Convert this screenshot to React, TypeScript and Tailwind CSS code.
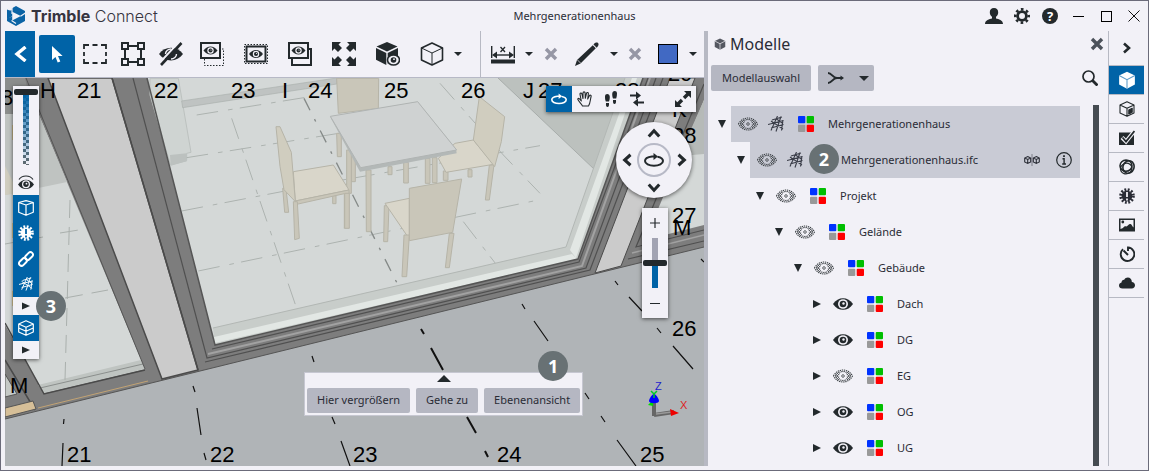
import type { ReactNode } from "react";
import clsx from "clsx";

const INK = "#23292c";

interface IconProps {
  className?: string;
}

/* ---------- icons ---------- */

function LogoMark() {
  return (
    <svg className="h-5 w-[18px]" viewBox="0 0 18 20" aria-hidden="true">
      <path
        fillRule="evenodd"
        d="M9 0 18 5v10l-9 5-9-5V5ZM5.2 5.8v8.6l8.6-4.3Z"
        fill="#0b63a5"
      />
      <path d="M5 0v8M4.500 14.500 9 17.500M13.500 10.300 18.500 7" fill="none" stroke="#f2f1f7" strokeWidth="1.200" />
      <path d="M0 5v-1.500L4.500 1v3ZM0 12l4.500-1.500" fill="#f2f1f7" stroke="#f2f1f7" strokeWidth=".6" />
      <path d="M0 3.500 4 5v6L0 13Z" fill="#0b63a5" />
    </svg>
  );
}

function Eye({ className }: IconProps) {
  return (
    <svg className={className} viewBox="0 0 20 12" aria-hidden="true">
      <path d="M0 6C5-1.800 15-1.800 20 6 15 13.800 5 13.800 0 6Z" fill={INK} />
      <path d="M5 6a5 4.800 0 0 1 10 0 5 4.800 0 0 1-10 0Z" fill="#f2f1f7" />
      <circle cx="10" cy="6" r="3.300" fill={INK} />
      <circle cx="10.500" cy="5.500" r="1.200" fill="#f2f1f7" />
    </svg>
  );
}

function GhostEye({ className }: IconProps) {
  return (
    <svg className={className} viewBox="0 0 20 14" fill="none" stroke="#3b4044" aria-hidden="true">
      <path d="M.5 7C4.500-1 15.500-1 19.500 7 15.500 15 4.500 15 .5 7Z" strokeWidth="1.100" strokeDasharray="1.300 .8" />
      <path d="M2.300 7C6 .8 14 .8 17.700 7 14 13.200 6 13.200 2.300 7Z" strokeWidth=".8" strokeDasharray="1.600 .9" />
      <path d="M2 6.500 6 3M3.500 7.500 6.500 4.500M18 6.500 14 3M16.500 7.500 13.500 4.500M2 7.500 6 11M3.500 6.500 6.500 9.500M18 7.500 14 11M16.500 6.500 13.500 9.500" strokeWidth=".8" />
      <circle cx="10" cy="7" r="4.300" strokeWidth=".6" strokeDasharray="1 1" />
      <circle cx="10" cy="7" r="1.300" strokeWidth=".8" />
    </svg>
  );
}

function GridLines({ className }: IconProps) {
  return (
    <svg className={className} viewBox="0 0 16 16" fill="none" stroke="currentColor" strokeWidth="1.100" aria-hidden="true">
      <path d="M4 4 14 1M0 8.500 15.500 4.500M3 12 15.500 8.500M9.500 0 3 14.500M13 .5 8 15.500M15 4 13.500 14.500M3 5l12 8M8.500 3l6.500 4.500" />
    </svg>
  );
}

function ColorSwatches({ className }: IconProps) {
  return (
    <svg className={className} viewBox="0 0 16 16" aria-hidden="true">
      <rect width="7.300" height="7.300" rx="1" fill="#0033ff" />
      <rect x="8.700" width="7.300" height="7.300" rx="1" fill="#00bf00" />
      <rect y="8.700" width="7.300" height="7.300" rx="1" fill="#999" />
      <rect x="8.700" y="8.700" width="7.300" height="7.300" rx="1" fill="#f00" />
    </svg>
  );
}

function CubeOutline({ className }: IconProps) {
  return (
    <svg className={className} viewBox="0 0 24 24" fill="none" stroke="currentColor" strokeLinejoin="round" aria-hidden="true">
      <path d="M12 1 22.500 6v12L12 23 1.500 18V6Z" strokeWidth="1.600" />
      <path d="M1.500 6 12 11 22.500 6M12 11v12" strokeWidth="1" />
    </svg>
  );
}

function CubeSolid({ className, gap = "#f2f1f7" }: IconProps & { gap?: string }) {
  return (
    <svg className={className} viewBox="0 0 24 24" aria-hidden="true">
      <path d="M12 1 22.500 6v12L12 23.500 1.500 18V6Z" fill="currentColor" />
      <path d="M1.500 6 12 11.500 22.500 6M12 11.500v12" fill="none" stroke={gap} strokeWidth="1.400" />
    </svg>
  );
}

function Burst({ className, mark = "#f2f1f7" }: IconProps & { mark?: string }) {
  return (
    <svg className={className} viewBox="0 0 16 16" aria-hidden="true">
      <circle cx="8" cy="8" r="5.400" fill="currentColor" />
      <circle cx="8" cy="8" r="6.400" fill="none" stroke="currentColor" strokeWidth="2.800" strokeDasharray="1.800 1.550" />
      <path d="M8 4v5M8 10.500v2" stroke={mark} strokeWidth="1.800" />
    </svg>
  );
}

function CaretDown({ className }: IconProps) {
  return (
    <svg className={className} viewBox="0 0 8 4" aria-hidden="true">
      <path d="M0 0h8L4 4Z" fill={INK} />
    </svg>
  );
}

function Cross({ className }: IconProps) {
  return (
    <svg className={className} viewBox="0 0 14 14" aria-hidden="true">
      <path d="M2 2l10 10M12 2 2 12" stroke="currentColor" strokeWidth="3.400" />
    </svg>
  );
}

function Orbit({ className }: IconProps) {
  return (
    <svg className={className} viewBox="0 0 20 14" fill="none" stroke="currentColor" strokeWidth="2" aria-hidden="true">
      <path d="M13.500 3.800C17 4.500 19 6 19 8c0 2.700-4 4.700-9 4.700S1 10.700 1 8c0-2.200 3-4 7-4.500h3" />
      <path d="M9.500 0v7L14 3.500Z" fill="currentColor" stroke="none" />
    </svg>
  );
}

function Diagonal({ className }: IconProps) {
  return (
    <svg className={className} viewBox="0 0 16 16" aria-hidden="true">
      <path d="M16 0v7l-2.300-2.300-3.500 3.500-2.400-2.400 3.500-3.500L9 0ZM0 16V9l2.300 2.300 3.500-3.500 2.400 2.400-3.500 3.500L7 16Z" fill="currentColor" />
    </svg>
  );
}

function Chevron({ className }: IconProps) {
  return (
    <svg className={className} viewBox="0 0 12 12" fill="none" stroke="currentColor" strokeWidth="2.600" aria-hidden="true">
      <path d="M1.500 9 6 4l4.500 5" />
    </svg>
  );
}

/* ---------- 3D scene ---------- */

const GRID_LABELS: [string, number, number][] = [
  ["8", 1, 105],
  ["I", 11, 140],
  ["I", 11, 238],
  ["I", 11, 306],
  ["H", 40, 98],
  ["21", 77, 98],
  ["22", 154, 98],
  ["23", 231, 98],
  ["I", 282, 98],
  ["24", 308, 98],
  ["25", 384, 98],
  ["26", 461, 98],
  ["J", 523, 98],
  ["27", 538, 98],
  ["28", 615, 98],
  ["29", 668, 81],
  ["K", 672, 117],
  ["28", 672, 143],
  ["27", 672, 223],
  ["M", 673, 235],
  ["26", 672, 336],
  ["25", 640, 462],
  ["24", 497, 462],
  ["23", 353, 462],
  ["22", 210, 462],
  ["21", 67, 462],
  ["M", 10, 393],
];

function Scene() {
  return (
    <svg
      className="absolute inset-0 h-full w-full"
      viewBox="5 78 699 388"
      preserveAspectRatio="xMinYMin slice"
      role="img"
      aria-label="3D-Ansicht"
    >
      <rect x="5" y="78" width="699" height="388" fill="#b0b4b7" />
      <path d="M5 78h699v169L5 419Z" fill="#7d7d7d" />
      <path d="M5 419 704 247" stroke="#555" />

      {/* left window */}
      <path d="M5 114 39 115 145 369 44 393 5 325Z" fill="#d4d8d7" />
      <path d="M5 114 39 115 67 182 5 195Z" fill="#bfc3c1" />
      <path d="M5 166 13 182v12l-8 1Z" fill="#d0cdbf" />
      <path d="M5 78h20l8 36H5Z" fill="#8b8d8c" />
      <path d="M38 385 141 360l4 9-101 24Z" fill="#bfc4c1" />
      <path d="M40 388 143 364" stroke="#8b8f8d" />
      <path d="M5 323 44 394 145 370M5 360 35 410" fill="none" stroke="#4a4a4a" strokeWidth="1.500" />
      <path d="M5 374 17 394 5 397Z" fill="#c5c9c6" stroke="#555" />
      <path d="M5 408 33 401l3 8-31 8Z" fill="#d6bf98" stroke="#555" />
      <path d="M38 408 148 381" stroke="#c2a374" />
      <path d="M70 200 65 380M60 233l25-4M5 244l38-7M65 298l43-8" stroke="#aab0ad" strokeDasharray="18 9" fill="none" />
      <path d="M26 78 145 369" stroke="#555" />

      {/* left post */}
      <path d="M48 78h64l86 292-36 9Z" fill="#cbcbcb" stroke="#4b4b4b" strokeWidth="1.500" />

      {/* main window */}
      <path d="M147 78 215 345 578 259 643 78Z" fill="#d4d8d7" />
      <path d="M498 78h145l-35 96-13-4Z" fill="#bcc1be" />
      <path d="M498 78 595 170" stroke="#a8adab" />

      <g transform="translate(150 75) scale(.33333)">
        <path d="M0 10h85l38 222-13 3v22l-48 14L0 60Z" fill="#cfd4d2" stroke="#bcc1bf" strokeWidth="3" />
        <path d="M60 240 110 235v24l-48 12Z" fill="#bcc1bf" />
        <path d="M95 78 560 9v18L98 98Z" fill="#bfc3c2" stroke="#abb0ae" strokeWidth="2" />
        <g fill="none" stroke="#adb3b0" strokeWidth="3" strokeDasharray="65 30 14 22">
          <path d="M145 588 1170 374M95 408 560 318 1170 212M110 248 560 176M140 120 480 65" />
          <path d="M245 130 440 700M870 25 945 110 1060 240 1170 355M940 440 1040 570" />
        </g>
        <path d="M462 70 745 632" fill="none" stroke="#858a88" strokeWidth="4" strokeDasharray="40 30 8 30" />

        <g fill="#c9c6b9" stroke="#b6b4a8" strokeWidth="3" strokeLinejoin="round">
          <path d="M560 10h126l-1 90-120 15ZM560 175h14v70h-12ZM604 245h12v75h-12ZM714 275h12v24h-12ZM761 262h14v62h-14ZM826 250h14v75h-14ZM847 248h14v75h-14Z" />
          <path d="M590 225h14v130h-14Z" />
          <path d="M548 362h10v24h-10ZM398 340h10l8 72h-12Z" />
          <path d="M430 290 550 270 597 345 436 378Z" fill="#d9d6ca" />
          <path d="M436 378 597 345v10L583 460V356L440 388Z" />
          <path d="M584 355h14v105h-14ZM430 380h12l6 110-14 4Z" />
          <path d="M378 155h12l34 77 12 148-34-36-12-70Z" fill="#d0cdbf" />
          <path d="M1018 270h14l-14 105h-12ZM880 288h14v28h-14ZM954 284h12v22h-12Z" />
          <path d="M865 250 915 205 970 195 1030 268 888 292Z" fill="#d9d6ca" />
          <path d="M988 65 1064 125 1054 200 1034 275 970 195Z" fill="#d0cdbf" />
          <path d="M648 285h15v185h-14Z" />
        </g>
        <path d="M541 127 630 290 920 235 918 222 803 80Z" fill="#b3b8b7" />
        <path d="M541 124 803 80 920 225 632 278Z" fill="#cfd2d2" stroke="#b0b4b3" strokeWidth="3" />
        <g fill="#c9c6b9" stroke="#b6b4a8" strokeWidth="3" strokeLinejoin="round">
          <path d="M703 392h14l-4 108h-12Z" />
          <path d="M705 385 778 370v122Z" fill="#d9d6ca" />
          <path d="M762 480h16l-8 125h-14ZM898 475h14l-14 103h-12Z" />
          <path d="M778 340 935 312 908 472 778 497Z" />
        </g>
      </g>

      {/* sill reflections */}
      <path d="M213 328 566 247 625 78h18l-65 181-363 86Z" fill="#c8cdca" />
      <path d="M214 337 572 254 577 259 215 343ZM570 250 632 78h5l-61 180Z" fill="#e2e7e4" />
      <path d="M213 328 566 247 625 78" fill="none" stroke="#b2b7b4" />

      {/* main window frame profiles */}
      <g fill="none">
        <path d="M208 354 582 266 650 78" stroke="#a2a2a2" strokeWidth="2" />
        <path d="M147 78 215 345 578 259 643 78" stroke="#555" strokeWidth="1.500" />
        <path d="M212 349 579 262 648 78M133 78 207 358 586 268 656 78M205 362 590 270 663 78" stroke="#505050" strokeWidth="1.200" />
        <path d="M112 78 198 370" stroke="#4b4b4b" strokeWidth="1.500" />
      </g>

      {/* right post and window */}
      <path d="M670 78h25l-74 188-26 7Z" fill="#cbcbcb" stroke="#4b4b4b" />
      <path d="M704 100 645 240 704 225Z" fill="#d4d8d7" />
      <path d="M704 100v54l-24 2 8-20Z" fill="#b6bab8" />
      <path d="M704 84 636 247 704 230M704 241 628 259" fill="none" stroke="#4f4f4f" strokeWidth="1.200" />
      <path d="M704 235 632 253" stroke="#a2a2a2" strokeWidth="1.500" />

      {/* grid axes on the ground */}
      <g fill="none" stroke="#111" strokeWidth="1.200">
        <path d="M64 419l-.5 5M63 443l-1 23M193 386l2 6M197 408l4 27M204 453l2 7M312 356l2 6M332 417l3 7M341 441l9 25" />
        <path d="M522 304l3 5M534 321l14 20M585 393l4 6M601 416l4 6M617 440l19 26M615 281l3 4M629 297l13 14M657 328l4 5M673 346l20 23M701 259l3 3" />
        <path d="M421 329l3 5M431 348l12 22M467 417l9 16M485 451l3 6" strokeWidth="2" />
      </g>

      <g fontFamily="Liberation Sans, Arial, sans-serif" fontSize="22" fill="#000">
        {GRID_LABELS.map(([label, x, y]) => (
          <text key={`${label}-${x}-${y}`} x={x} y={y}>
            {label}
          </text>
        ))}
      </g>

      {/* axis gizmo */}
      <g fontFamily="Liberation Sans, Arial, sans-serif" fontSize="11">
        <path d="M654 416V402M654 415l20-3" stroke="#666" strokeWidth="4" />
        <path d="M656 414l16-2" stroke="#999" strokeWidth="1.500" />
        <path d="M648 405 653 400v6Z" fill="#0d0" />
        <path d="M649 401c0-2 3-7 5-7s5 5 5 7c0 3-10 3-10 0Z" fill="#00f" />
        <path d="M651 391l3 3 3-3M654 394v4" stroke="#0c2" strokeWidth="1.500" fill="none" />
        <path d="M670 409l9 4-8 3Z" fill="#e00" />
        <text x="655" y="390" fill="#22c">Z</text>
        <text x="680" y="409" fill="#d22">X</text>
      </g>
    </svg>
  );
}

/* ---------- shared pieces ---------- */

function Badge({ children, className }: { children: ReactNode; className: string }) {
  return (
    <span
      className={clsx(
        "absolute z-10 flex size-[30px] items-center justify-center rounded-full bg-[#687174] font-['Open_Sans',sans-serif] text-lg leading-none font-bold text-white",
        className,
      )}
    >
      {children}
    </span>
  );
}

function ToolButton({ label, className, children }: { label: string; className: string; children: ReactNode }) {
  return (
    <button type="button" aria-label={label} className={clsx("flex shrink-0 items-center justify-center", className)}>
      {children}
    </button>
  );
}

function TitleBar() {
  return (
    <header className="grid h-[30px] shrink-0 grid-cols-[1fr_auto_1fr] items-center">
      <div className="flex items-center gap-1.5 pl-0.5">
        <LogoMark />
        <span className="font-[Inter,sans-serif] text-base leading-5 font-light text-[#36343f]">
          <b className="font-bold">Trimble</b> Connect
        </span>
      </div>
      <h1 className="text-[11px]">Mehrgenerationenhaus</h1>
      <div className="-mr-1 flex items-center justify-end">
        <ToolButton label="Benutzer" className="w-7">
          <svg className="size-[18px]" viewBox="0 0 18 18" fill={INK}>
            <path d="M9 1c2.800 0 4.200 1.800 4.200 4.200 0 2-.9 3.700-2.200 4.600v1.700c2.500.6 7 1.700 7 5.500H0c0-3.800 4.500-4.900 7-5.500V9.800C5.700 8.900 4.800 7.200 4.800 5.200 4.800 2.800 6.200 1 9 1Z" />
          </svg>
        </ToolButton>
        <ToolButton label="Einstellungen" className="w-7">
          <svg className="size-4" viewBox="0 0 16 16" fill="none" stroke={INK}>
            <circle cx="8" cy="8" r="4.400" strokeWidth="2.800" />
            <circle cx="8" cy="8" r="6.700" strokeWidth="2.600" strokeDasharray="2.600 2.660" strokeDashoffset="1.300" />
          </svg>
        </ToolButton>
        <ToolButton label="Hilfe" className="w-7">
          <span className="flex size-4 items-center justify-center rounded-full bg-[#23292c] text-[13px] leading-none font-bold text-white">?</span>
        </ToolButton>
        <ToolButton label="Minimieren" className="w-7">
          <span className="h-px w-[11px] bg-black" />
        </ToolButton>
        <ToolButton label="Maximieren" className="w-7">
          <span className="size-[11px] border border-black" />
        </ToolButton>
        <ToolButton label="Schließen" className="w-7">
          <svg className="size-3" viewBox="0 0 12 12" stroke="#111">
            <path d="M.5.5l11 11M11.500.5l-11 11" />
          </svg>
        </ToolButton>
      </div>
    </header>
  );
}

function BoxedEye({ children, x, y }: { children: ReactNode; x: number; y: number }) {
  return (
    <svg className="size-6" viewBox="0 0 24 24" fill="none" stroke={INK}>
      {children}
      <rect x={x} y={y} width="19" height="15" strokeWidth="2" fill="#f2f1f7" />
      <g transform={`translate(${x + 2.5} ${y + 3.5})`} stroke="none">
        <path d="M0 4C4-1.300 10-1.300 14 4 10 9.300 4 9.300 0 4Z" fill={INK} />
        <circle cx="7" cy="4" r="3.200" fill="#f2f1f7" />
        <circle cx="7" cy="4" r="2" fill={INK} />
        <circle cx="7.500" cy="3.500" r=".6" fill="#f2f1f7" />
      </g>
    </svg>
  );
}

function Toolbar() {
  return (
    <div className="flex h-[47px] shrink-0 items-stretch border-b border-[#b7b9c6]">
      <ToolButton label="Zurück" className="w-[30px] bg-[#0063a7]">
        <svg className="h-4 w-3.5" viewBox="0 0 14 16" fill="none" stroke="#fff" strokeWidth="3.400">
          <path d="M12.500 1 4 8l8.500 7" />
        </svg>
      </ToolButton>
      <ToolButton label="Auswählen" className="my-1 mr-px ml-1 w-9 rounded-xs bg-[#0063a7]">
        <svg className="size-5" viewBox="0 0 20 20" fill="#fff">
          <path d="M5 2v14l3.500-3 2.200 5.500 2.600-1L11 12h4.600Z" />
        </svg>
      </ToolButton>
      <ToolButton label="Rechteckauswahl" className="w-[38px]">
        <svg className="size-6" viewBox="0 0 24 24" fill="none" stroke={INK} strokeWidth="1.800">
          <path d="M1 7V3h5M9.500 3h5M18 3h5v4M23 10v4M23 17v4h-5M14.500 21h-5M6 21H1v-4M1 14v-4" />
        </svg>
      </ToolButton>
      <ToolButton label="Transformieren" className="w-[38px]">
        <svg className="size-6" viewBox="0 0 24 24" fill="none" stroke={INK} strokeWidth="2">
          <path d="M1 1h6v6H1ZM17 1h6v6h-6ZM1 17h6v6H1ZM17 17h6v6h-6ZM7 4h10M7 20h10M4 7v10M20 7v10" />
        </svg>
      </ToolButton>
      <ToolButton label="Ausblenden" className="w-[38px]">
        <svg className="size-6" viewBox="0 0 24 24" fill="none">
          <path d="M0 12C6 3.500 18 3.500 24 12 18 20.500 6 20.500 0 12Z" fill={INK} />
          <path d="M6.500 12a5.500 5 0 0 1 5.500-5M17.500 12a5.500 5 0 0 1-5.500 5" stroke="#f2f1f7" strokeWidth="1.400" />
          <path d="M20 0 .5 21" stroke="#f2f1f7" strokeWidth="2" />
          <path d="M22.500 1 2 23" stroke={INK} strokeWidth="2.600" />
        </svg>
      </ToolButton>
      <ToolButton label="Auswahl anzeigen" className="w-11">
        <BoxedEye x={1} y={1}>
          <path d="M4.500 17v6.500h19V7H20" strokeDasharray="1.500 1.500" />
        </BoxedEye>
      </ToolButton>
      <ToolButton label="Auswahl isolieren" className="w-11">
        <BoxedEye x={2.5} y={4.5}>
          <rect x=".5" y="2.500" width="23" height="19" strokeDasharray="1.500 1.500" />
        </BoxedEye>
      </ToolButton>
      <ToolButton label="Alle anzeigen" className="w-11">
        <BoxedEye x={1} y={1}>
          <path d="M4 16v7h19V7h-3" strokeWidth="2" />
        </BoxedEye>
      </ToolButton>
      <ToolButton label="Alles einpassen" className="w-11">
        <svg className="size-6" viewBox="0 0 24 24" fill={INK}>
          <path d="M0 0h9L6.500 2.500 10 6 6 10 2.500 6.500 0 9ZM24 0v9l-2.500-2.500L18 10l-4-4 3.500-3.500L15 0ZM0 24v-9l2.500 2.500L6 14l4 4-3.500 3.500L9 24ZM24 24h-9l2.500-2.500L14 18l4-4 3.500 3.500L24 15Z" />
        </svg>
      </ToolButton>
      <ToolButton label="Transparenz" className="w-11">
        <svg className="size-6" viewBox="0 0 24 24">
          <path d="M11 0 21.500 4.500 11 9.500.5 4.500ZM0 6l10.300 5v12L0 17.800ZM22 6v9c-6-3-11 1-9.500 6.500l-.8.500V11Z" fill={INK} />
          <ellipse cx="17.500" cy="18" rx="6" ry="5" fill="#f2f1f7" stroke={INK} strokeWidth="1.600" />
          <circle cx="17.500" cy="18" r="2.800" fill={INK} />
          <circle cx="18" cy="17.200" r=".9" fill="#f2f1f7" />
        </svg>
      </ToolButton>
      <ToolButton label="Ansichtswürfel" className="w-11 text-[#23292c]">
        <CubeOutline className="size-6" />
      </ToolButton>
      <ToolButton label="Weitere Ansichten" className="w-2">
        <CaretDown className="h-1 w-2" />
      </ToolButton>

      <div className="ml-[18px] flex items-stretch border-l border-[#b7b9c3]">
        <ToolButton label="Messen" className="w-11">
          <svg className="h-5 w-6" viewBox="0 0 24 20" fill="none" stroke={INK}>
            <path d="M.7 2v12M23.300 2v12" strokeWidth="1.400" />
            <path d="M0 17.500h24" strokeWidth="4" />
            <path d="M3 11h18" strokeWidth="1.400" />
            <path d="M1 11l5-3.500v7ZM23 11l-5-3.500v7Z" fill={INK} stroke="none" />
            <path d="M9.500 3l4.500 5M14 3 9.500 8" strokeWidth="1.300" />
          </svg>
        </ToolButton>
        <ToolButton label="Messoptionen" className="w-2">
          <CaretDown className="h-1 w-2" />
        </ToolButton>
        <ToolButton label="Messungen löschen" className="w-9 text-[#9697a5]">
          <Cross className="size-3.5" />
        </ToolButton>
        <ToolButton label="Markieren" className="w-9">
          <svg className="size-6" viewBox="0 0 24 24" fill={INK}>
            <path d="M0 24l2-6L17.800 3.200l3 3L5.500 21.500ZM18.500 2.400C20 .4 22 .2 23 1s.8 2.800-1.300 4.700Z" />
            <path d="M2.500 18l3.500 3.500" stroke="#f2f1f7" strokeWidth=".7" />
          </svg>
        </ToolButton>
        <ToolButton label="Markierungsoptionen" className="w-[18px]">
          <CaretDown className="h-1 w-2" />
        </ToolButton>
        <ToolButton label="Markierungen löschen" className="w-6 text-[#9697a5]">
          <Cross className="size-3.5" />
        </ToolButton>
        <ToolButton label="Farbe" className="w-[42px]">
          <span className="size-5 border border-black bg-[#4169c3]" />
        </ToolButton>
        <ToolButton label="Farboptionen" className="w-2">
          <CaretDown className="h-1 w-2" />
        </ToolButton>
      </div>
    </div>
  );
}

/* ---------- overlays on the 3D view ---------- */

const PANEL = "bg-[#f2f1f7] shadow-[0_1px_4px_rgba(0,0,0,0.6)]";

const VERTICAL_RANGE =
  "block appearance-none bg-transparent bg-center bg-no-repeat [direction:rtl] [writing-mode:vertical-lr] [&::-webkit-slider-thumb]:h-1.5 [&::-webkit-slider-thumb]:w-6 [&::-webkit-slider-thumb]:appearance-none [&::-webkit-slider-thumb]:rounded-xs [&::-webkit-slider-thumb]:bg-[#23292c]";

function DisplayTools() {
  return (
    <div className={clsx("absolute top-2 left-2 flex w-[26px] flex-col", PANEL)}>
      <div className="flex h-[109px] flex-col items-center pt-[3px]">
        <div className="relative h-[76px] w-6">
          <svg className="absolute inset-0 h-full w-full" viewBox="0 0 24 76" aria-hidden="true">
            <defs>
              <linearGradient id="fade" x1="0" y1="0" x2="0" y2="1">
                <stop offset="0" stopColor="#0063a7" />
                <stop offset="1" stopColor="#0063a7" stopOpacity="0" />
              </linearGradient>
              <pattern id="checks" width="6" height="6" patternUnits="userSpaceOnUse" x="9">
                <path d="M0 0h3v3H0ZM3 3h3v3H3Z" fill="#5f6b70" />
              </pattern>
            </defs>
            <rect x="9" y="4" width="6" height="72" fill="url(#checks)" />
            <rect x="9" y="4" width="6" height="72" fill="url(#fade)" />
          </svg>
          <input
            type="range"
            aria-label="Deckkraft"
            defaultValue={100}
            className={clsx("relative h-[76px] w-6", VERTICAL_RANGE)}
          />
        </div>
        <svg className="mt-2.5 h-[15px] w-4" viewBox="0 0 16 15" fill="none" aria-hidden="true">
          <path d="M1 4.500C4-.2 12-.2 15 4.500" stroke={INK} strokeWidth="1.200" />
          <path d="M0 9.500C4 3 12 3 16 9.500 12 15.500 4 15.500 0 9.500Z" fill={INK} />
          <circle cx="8" cy="9.300" r="4" fill="#f2f1f7" />
          <circle cx="8" cy="9.300" r="2.700" fill={INK} />
          <circle cx="8.500" cy="8.700" r=".9" fill="#f2f1f7" />
        </svg>
      </div>
      <div className="grid h-[102px] grid-rows-4 bg-[#0063a7] text-white">
        <ToolButton label="Modelle" className="w-full">
          <svg className="h-4 w-4" viewBox="0 0 16 16" fill="none" stroke="currentColor" strokeWidth="1.200" strokeLinejoin="round">
            <path d="M.7 2.500 8 .7l7.300 1.800v9.800L8 15.300.7 12.300ZM.7 2.500 8 5l7.300-2.500M8 5v10" />
          </svg>
        </ToolButton>
        <ToolButton label="Kollisionen" className="w-full">
          <Burst className="size-4" mark="#0063a7" />
        </ToolButton>
        <ToolButton label="Verknüpfungen" className="w-full">
          <svg className="size-4" viewBox="0 0 16 16" fill="none" stroke="currentColor" strokeWidth="1.900">
            <rect x="6.500" y="2.600" width="9" height="5" rx="2.500" transform="rotate(-45 11 5.100)" />
            <rect x=".5" y="8.400" width="9" height="5" rx="2.500" transform="rotate(-45 5 10.900)" />
          </svg>
        </ToolButton>
        <ToolButton label="Raster" className="w-full">
          <GridLines className="size-3.5" />
        </ToolButton>
      </div>
      <ToolButton label="Mehr Raster" className="h-[18px] w-full">
        <svg className="h-2 w-2" viewBox="0 0 8 8"><path d="M0 .5v7L8 4Z" fill={INK} /></svg>
      </ToolButton>
      <ToolButton label="Ebenen" className="h-[26px] w-full bg-[#0063a7] text-white">
        <svg className="size-4" viewBox="0 0 16 16" fill="none" stroke="currentColor" strokeWidth="1.200" strokeLinejoin="round">
          <path d="M8 .7 15.300 4v8L8 15.300.7 12V4ZM.7 4 8 7.300 15.300 4M.7 8 8 11.300 15.300 8M8 7.300v8" />
        </svg>
      </ToolButton>
      <ToolButton label="Mehr Ebenen" className="h-[18px] w-full">
        <svg className="h-2 w-2" viewBox="0 0 8 8"><path d="M0 .5v7L8 4Z" fill={INK} /></svg>
      </ToolButton>
      <Badge className="top-[205px] left-[23px]">3</Badge>
    </div>
  );
}

function NavigationTools() {
  return (
    <div className="absolute top-2 right-2 flex flex-col items-end text-[#23292c]">
      <div className={clsx("flex h-[26px] w-[150px]", PANEL)}>
        <ToolButton label="Umkreisen" className="w-[26px] bg-[#0063a7] text-white">
          <Orbit className="h-3 w-4" />
        </ToolButton>
        <ToolButton label="Verschieben" className="w-[26px]">
          <svg className="size-4" viewBox="0 0 16 16" fill="none" stroke="currentColor" strokeWidth="1.100" strokeLinecap="round" strokeLinejoin="round">
            <path d="M5.500 15C4.500 13 2 11 .9 8.600.4 7.600 1.700 6.900 2.600 8L4.300 10 3 3.300c-.2-1.400 1.500-1.700 1.900-.4L6 7.500 6 1.900c0-1.400 2-1.400 2.100 0L8.300 7.300 9.500 2.300c.3-1.300 2.100-1 1.900.4L10.700 8l1.700-3.300c.6-1.200 2.200-.5 1.700.8C13.200 8.500 13.500 12 11.500 15Z" />
          </svg>
        </ToolButton>
        <ToolButton label="Gehen" className="w-[26px]">
          <svg className="h-4 w-3.5" viewBox="0 0 14 16" fill="currentColor">
            <path d="M1 5.500C1 3.800 2 3 3.300 3S5.800 4 5.800 6 5.500 9 5 10.500H1.800C1.200 9 1 7.500 1 5.500ZM2 12h3c.2 2.500-.3 4-1.500 4S1.700 14.500 2 12ZM8.200 3C8.200 1 9.300 0 10.700 0S13 .8 13 2.500s-.2 3.500-.8 5H9C8.500 6 8.200 5 8.200 3ZM9 9h3c.3 2.500-.3 4-1.500 4S8.800 11.500 9 9Z" />
          </svg>
        </ToolButton>
        <ToolButton label="Drehen" className="w-[26px]">
          <svg className="size-4" viewBox="0 0 16 16" fill="currentColor">
            <path d="M1 3.600h6V.5l5 4-5 4V5.400H1ZM15 10.600H9V7.500l-5 4 5 4v-3.100h6Z" />
          </svg>
        </ToolButton>
        <ToolButton label="Vollbild" className="ml-auto w-[26px]">
          <Diagonal className="size-4" />
        </ToolButton>
      </div>

      <div className={clsx("mt-2.5 mr-1 grid size-[76px] grid-cols-[1fr_34px_1fr] grid-rows-[1fr_34px_1fr] place-items-center rounded-full", PANEL)}>
        <ToolButton label="Nach oben" className="col-start-2">
          <Chevron className="size-3.5" />
        </ToolButton>
        <ToolButton label="Nach links" className="row-start-2">
          <Chevron className="size-3.5 -rotate-90" />
        </ToolButton>
        <ToolButton label="Umkreisen zentriert" className="row-start-2 size-[34px] rounded-full border-2 border-[#b7b9c6]">
          <Orbit className="h-3.5 w-5" />
        </ToolButton>
        <ToolButton label="Nach rechts" className="row-start-2">
          <Chevron className="size-3.5 rotate-90" />
        </ToolButton>
        <ToolButton label="Nach unten" className="col-start-2 row-start-3">
          <Chevron className="size-3.5 rotate-180" />
        </ToolButton>
      </div>

      <div className={clsx("mt-2.5 mr-7 flex w-[26px] flex-col items-center", PANEL)}>
        <ToolButton label="Vergrößern" className="h-[30px] w-full">
          <svg className="size-2.5" viewBox="0 0 10 10" stroke={INK} strokeWidth="1.200"><path d="M0 5h10M5 0v10" /></svg>
        </ToolButton>
        <input
          type="range"
          aria-label="Zoom"
          defaultValue={50}
          className={clsx(
            "h-[50px] w-6 bg-[linear-gradient(#a2a3b2_50%,#0063a7_50%)] bg-size-[6px_100%]",
            VERTICAL_RANGE,
          )}
        />
        <ToolButton label="Verkleinern" className="h-[30px] w-full">
          <span className="h-px w-2.5 bg-[#23292c]" />
        </ToolButton>
      </div>
    </div>
  );
}

function ContextActions() {
  return (
    <div className="absolute top-[294px] left-[299px] border border-[#c6c7d1] bg-[#f2f1f7] p-0.5">
      <svg className="mx-auto mb-1.5 h-[7px] w-3.5" viewBox="0 0 14 7" aria-hidden="true">
        <path d="M7 0l7 7H0Z" fill={INK} />
      </svg>
      <div className="flex gap-1.5">
        {["Hier vergrößern", "Gehe zu", "Ebenenansicht"].map((action) => (
          <button key={action} type="button" className="h-[25px] rounded-xs bg-[#b5b7c2] px-2.5 text-[11px] whitespace-nowrap">
            {action}
          </button>
        ))}
      </div>
      <Badge className="-top-[22px] right-[14px]">1</Badge>
    </div>
  );
}

/* ---------- model tree ---------- */

interface TreeNode {
  name: string;
  depth: number;
  open?: boolean;
  visible?: boolean;
  model?: boolean;
  file?: boolean;
}

const TREE: TreeNode[] = [
  { name: "Mehrgenerationenhaus", depth: 0, open: true, model: true },
  { name: "Mehrgenerationenhaus.ifc", depth: 1, open: true, model: true, file: true },
  { name: "Projekt", depth: 2, open: true },
  { name: "Gelände", depth: 3, open: true },
  { name: "Gebäude", depth: 4, open: true },
  { name: "Dach", depth: 5, visible: true },
  { name: "DG", depth: 5, visible: true },
  { name: "EG", depth: 5 },
  { name: "OG", depth: 5, visible: true },
  { name: "UG", depth: 5, visible: true },
];

function TreeRow({ node }: { node: TreeNode }) {
  return (
    <li className="flex h-9" style={{ paddingLeft: node.depth * 19 }}>
      <button
        type="button"
        aria-label={`${node.name} ${node.open ? "zuklappen" : "aufklappen"}`}
        className="flex w-[18px] shrink-0 items-center justify-center"
      >
        <svg className={clsx("size-2", !node.open && "-rotate-90")} viewBox="0 0 8 8" aria-hidden="true">
          <path d="M0 0h8L4 8Z" fill={INK} />
        </svg>
      </button>
      <div className={clsx("flex flex-1 items-center pr-2 pl-[7px]", node.model && "bg-[#c9cbd5]")}>
        <button type="button" aria-label="Sichtbarkeit" className="mr-3.5 shrink-0">
          {node.visible ? <Eye className="h-3 w-5" /> : <GhostEye className="h-3.5 w-5" />}
        </button>
        {node.model && (
          <button type="button" aria-label="Raster" className="-ml-1 mr-3.5 shrink-0">
            <GridLines className="size-4 text-[#3a3d48]" />
          </button>
        )}
        <span className={clsx("relative shrink-0", node.file ? "mr-2" : "mr-3.5")}>
          <ColorSwatches className="size-4" />
          {node.file && <Badge className="-top-2 -left-2">2</Badge>}
        </span>
        <span className="text-[11px]">{node.name}</span>
        {node.file && (
          <span className="ml-auto flex items-center gap-4">
            <button type="button" aria-label="Vergleichen">
              <svg className="h-3 w-4" viewBox="0 0 16 12" fill="none" stroke="#2c2f38" strokeWidth="1.100">
                <path d="M3.700 2.500 6.700 4v4l-3 1.500L.7 8V4ZM.7 4l3 1.400L6.700 4M3.700 5.400v4M12.300 2.500l3 1.500v4l-3 1.500-3-1.500V4ZM9.300 4l3 1.400 3-1.400M12.300 5.400v4" />
                <path d="M8 0v12" strokeWidth=".5" />
              </svg>
            </button>
            <button type="button" aria-label="Informationen">
              <svg className="size-4" viewBox="0 0 16 16" fill="none" stroke="#23292c">
                <circle cx="8" cy="8" r="7.300" strokeWidth="1.200" />
                <path d="M6.500 6.700h1.600v5M6.200 12h3.800" strokeWidth="1.400" />
                <path d="M8 3.300v1.800" strokeWidth="1.800" />
              </svg>
            </button>
          </span>
        )}
      </div>
    </li>
  );
}

function ModelPanel() {
  return (
    <section className="flex w-[400px] shrink-0 flex-col pl-[3px]">
      <div className="flex h-[25px] items-center pr-1 pl-[3px]">
        <CubeSolid className="size-3 text-[#555861]" />
        <h2 className="ml-1 text-base leading-6">Modelle</h2>
        <button type="button" aria-label="Panel schließen" className="ml-auto text-[#4c525b]">
          <Cross className="size-3.5" />
        </button>
      </div>
      <div className="mt-[9px] flex h-[26px] items-center pr-2.5">
        <button type="button" className="h-[26px] w-[100px] rounded-xs bg-[#b5b7c2] text-[11px]">
          Modellauswahl
        </button>
        <button
          type="button"
          aria-label="Zusammenführen"
          className="ml-[7px] flex h-[26px] w-14 items-center justify-between rounded-xs bg-[#b5b7c2] pr-[5px] pl-2.5"
        >
          <svg className="h-3 w-4" viewBox="0 0 16 12" fill="none" stroke={INK} strokeWidth="2">
            <path d="M0 1c4 0 4.500 5 9 5h5M0 11c4 0 4.500-5 9-5" />
            <path d="M12.500 3.500v5L16 6Z" fill={INK} stroke="none" />
          </svg>
          <svg className="h-[5px] w-2.5" viewBox="0 0 10 5" aria-hidden="true">
            <path d="M0 0h10L5 5Z" fill={INK} />
          </svg>
        </button>
        <button type="button" aria-label="Suchen" className="ml-auto">
          <svg className="size-4" viewBox="0 0 16 16" fill="none" stroke={INK}>
            <circle cx="6.500" cy="6.500" r="5.500" strokeWidth="1.700" />
            <path d="M10.500 10.500l5 5" strokeWidth="2.800" />
          </svg>
        </button>
      </div>
      <div className="mt-3.5 flex flex-1">
        <ul className="mt-px flex-1 pl-0.5">
          {TREE.map((node) => (
            <TreeRow key={node.name} node={node} />
          ))}
        </ul>
        <div className="mr-[9px] ml-[13px] w-1.5 bg-[#454b51]" />
      </div>
    </section>
  );
}

const SIDEBAR: { label: string; icon: ReactNode }[] = [
  {
    label: "Objekte",
    icon: (
      <svg className="size-4" viewBox="0 0 16 16" fill="none" stroke={INK} strokeWidth="1.100" strokeLinejoin="round">
        <path d="M8 .7 15 4v8l-7 3.300L1 12V4ZM1 4l7 3.300L15 4M8 7.300v8" />
        <path d="M9.800 9 13.200 7.300v4l-3.400 1.700Z" fill={INK} />
      </svg>
    ),
  },
  {
    label: "Aufgaben",
    icon: (
      <svg className="size-4" viewBox="0 0 16 16" fill="none">
        <path d="M0 2.500h15V15H0Z" fill={INK} />
        <path d="M3 7.500l4 4L15.500 1" stroke="#f2f1f7" strokeWidth="4" />
        <path d="M3.500 7.500l3.500 4L15.500 1" stroke={INK} strokeWidth="1.800" />
      </svg>
    ),
  },
  {
    label: "Freigaben",
    icon: (
      <svg className="size-4" viewBox="0 0 16 16" fill="none" stroke={INK} strokeWidth="1.600">
        <ellipse cx="7" cy="6.700" rx="6" ry="5.600" />
        <ellipse cx="9.500" cy="8" rx="5.500" ry="6.300" transform="rotate(20 9.500 8)" />
        <ellipse cx="7.200" cy="9.500" rx="5.800" ry="5.300" transform="rotate(-25 7.200 9.500)" strokeWidth="1.200" />
      </svg>
    ),
  },
  { label: "Kollisionen", icon: <Burst className="size-4" /> },
  {
    label: "Ansichten",
    icon: (
      <svg className="size-4" viewBox="0 0 16 16">
        <path d="M0 1.500h16v13H0Z" fill={INK} />
        <path d="M1.500 3h13v7.500C13 9 12.500 6.500 10.800 7 9.500 7.300 8.500 9 7.500 9.500 6 9 5 9.500 4 11L1.500 12Z" fill="#f2f1f7" />
        <circle cx="3.800" cy="5" r="1.400" fill={INK} />
      </svg>
    ),
  },
  {
    label: "Verlauf",
    icon: (
      <svg className="size-4" viewBox="0 0 16 16" fill="none" stroke={INK}>
        <path d="M4 3.100A6.800 6.800 0 1 0 9 1.400V5" strokeWidth="1.900" />
        <path d="M4.500 4.500 9 9" strokeWidth="2" />
      </svg>
    ),
  },
  {
    label: "Cloud",
    icon: (
      <svg className="size-4" viewBox="0 0 16 16" fill={INK}>
        <path d="M3.500 13.500C1.300 13.500 0 12 0 10.400 0 9 1 7.800 2.500 7.500 2.500 5.700 3.800 4.600 5.200 4.700 6 3.200 7.300 2.500 8.800 2.500c2.300 0 4 1.700 4 4v.6c1.800.1 3.200 1.400 3.200 3.200s-1.300 3.200-3.200 3.200Z" />
      </svg>
    ),
  },
];

function Sidebar() {
  return (
    <nav className="flex w-9 shrink-0 flex-col border-l border-[#b7b9c3]">
      <ToolButton label="Leiste einklappen" className="h-[35px] border-b border-[#b7b9c3] text-[#23292c]">
        <Chevron className="size-3 rotate-90" />
      </ToolButton>
      <ToolButton label="Modelle" className="h-[29px] border-b border-[#b7b9c3] bg-[#0063a7] text-white">
        <CubeSolid className="size-[18px]" gap="#5c9bc9" />
      </ToolButton>
      {SIDEBAR.map(({ label, icon }) => (
        <ToolButton key={label} label={label} className="h-[29px] border-b border-[#b7b9c3]">
          {icon}
        </ToolButton>
      ))}
    </nav>
  );
}

export default function App() {
  return (
    <div className="flex min-h-screen flex-col border border-[#6b6b7a] bg-[#f2f1f7] px-1 pb-1 font-['Noto_Sans','Open_Sans',sans-serif] text-[#2a2c36]">
      <TitleBar />
      <main className="flex min-h-0 flex-1">
        <div className="flex min-w-0 flex-1 flex-col">
          <Toolbar />
          <div className="relative flex-1 overflow-hidden">
            <Scene />
            <DisplayTools />
            <NavigationTools />
            <ContextActions />
          </div>
        </div>
        <div className="w-1 shrink-0 bg-[#b7b9c3]" />
        <ModelPanel />
        <Sidebar />
      </main>
    </div>
  );
}
